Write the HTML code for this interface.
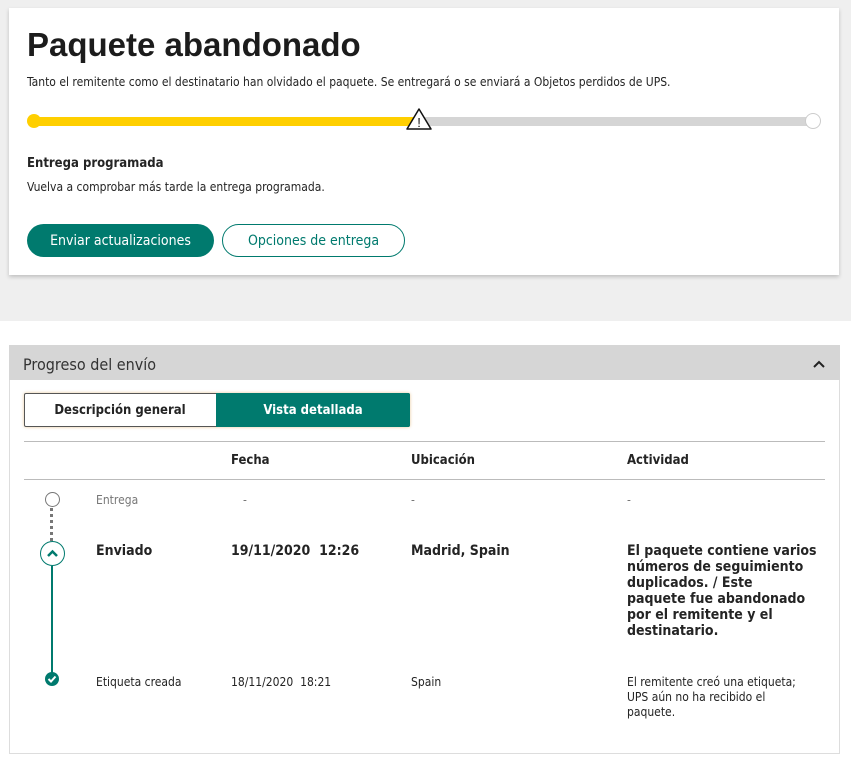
<!DOCTYPE html>
<html><head><meta charset="utf-8"><style>
*{margin:0;padding:0;box-sizing:border-box}
body{width:851px;height:765px;background:#fff;font-family:"DejaVu Sans Condensed","Liberation Sans",sans-serif;color:#242424;position:relative;overflow:hidden}
.bg{position:absolute;left:0;top:0;width:851px;height:321px;background:#efefef}
.card{position:absolute;left:9px;top:8px;width:830px;height:267px;background:#fff;box-shadow:0 2px 4px rgba(0,0,0,.2)}
.a{position:absolute;white-space:nowrap}
.btn{position:absolute;top:224px;height:33px;border-radius:17px;font-size:14px;display:flex;align-items:center;justify-content:center}
.panel{position:absolute;left:9px;top:345px;width:831px;height:409px;border:1px solid #ddd;border-top:none}
.ph{position:absolute;left:9px;top:345px;width:831px;height:35px;background:#d6d6d6}
.line{position:absolute;left:24px;width:801px;height:1px;background:#bbb}
</style></head><body>
<div class="bg"></div>
<div class="card"></div>
<div class="a" style="left:27px;top:26px;font-family:'Liberation Sans',sans-serif;font-weight:bold;font-size:33px;color:#1c1c1c">Paquete abandonado</div>
<div class="a" style="left:27px;top:75px;font-size:12px">Tanto el remitente como el destinatario han olvidado el paquete. Se entregará o se enviará a Objetos perdidos de UPS.</div>
<div class="a" style="left:34px;top:117px;width:385px;height:9px;background:#ffcf00"></div>
<div class="a" style="left:419px;top:117px;width:394px;height:9px;background:#d5d5d5"></div>
<div class="a" style="left:27px;top:114px;width:14px;height:14px;border-radius:50%;background:#ffcf00"></div>
<div class="a" style="left:805px;top:113px;width:16px;height:16px;border-radius:50%;background:#fff;border:1px solid #ccc"></div>
<svg class="a" style="left:405px;top:107px" width="28" height="24" viewBox="0 0 28 24"><path d="M14 2 L26 22 L2 22 Z" fill="#fff" stroke="#111" stroke-width="1.5" stroke-linejoin="round"/><text x="14" y="20" text-anchor="middle" font-size="13" font-family="Liberation Sans" fill="#111">!</text></svg>
<div class="a" style="left:27px;top:156px;font-size:13px;font-weight:bold">Entrega programada</div>
<div class="a" style="left:27px;top:180px;font-size:12px">Vuelva a comprobar más tarde la entrega programada.</div>
<div class="btn" style="left:27px;width:187px;background:#007a6e;color:#fff">Enviar actualizaciones</div>
<div class="btn" style="left:222px;width:183px;border:1px solid #007a6e;color:#007a6e;background:#fff">Opciones de entrega</div>

<div class="panel"></div>
<div class="ph"></div>
<div class="a" style="left:23px;top:355px;font-size:16px;color:#333">Progreso del envío</div>
<svg class="a" style="left:812px;top:359px" width="14" height="10"><path d="M2 8 L7 3 L12 8" fill="none" stroke="#222" stroke-width="2"/></svg>
<div class="a" style="left:24px;top:393px;width:386px;height:34px;border:1px solid #555;border-radius:2px;box-shadow:0 0 3px rgba(200,120,0,.4)"></div>
<div class="a" style="left:216px;top:393px;width:194px;height:34px;background:#007a6e;border-radius:0 2px 2px 0"></div>
<div class="a" style="left:24px;top:403px;width:192px;text-align:center;font-size:13px;font-weight:bold">Descripción general</div>
<div class="a" style="left:216px;top:403px;width:194px;text-align:center;font-size:13px;font-weight:bold;color:#fff">Vista detallada</div>
<div class="line" style="top:441px"></div>
<div class="line" style="top:479px"></div>
<div class="a" style="left:231px;top:453px;font-size:13px;font-weight:bold">Fecha</div>
<div class="a" style="left:411px;top:453px;font-size:13px;font-weight:bold">Ubicación</div>
<div class="a" style="left:627px;top:453px;font-size:13px;font-weight:bold">Actividad</div>

<div class="a" style="left:45px;top:492px;width:15px;height:15px;border-radius:50%;border:1px solid #777;background:#fff"></div>
<div class="a" style="left:50px;top:508px;height:33px;border-left:3px dotted #777"></div>
<div class="a" style="left:40px;top:541px;width:25px;height:25px;border-radius:50%;border:1.5px solid #007a6e;background:#fff"></div>
<svg class="a" style="left:45px;top:546px" width="15" height="15"><path d="M3 10 L7.5 5.5 L12 10" fill="none" stroke="#007a6e" stroke-width="2.5"/></svg>
<div class="a" style="left:51px;top:566px;width:1.5px;height:108px;background:#007a6e"></div>
<div class="a" style="left:45px;top:672px;width:14px;height:14px;border-radius:50%;background:#007a6e"></div>
<svg class="a" style="left:45px;top:672px" width="14" height="14"><path d="M3.5 7 L6 9.5 L10.5 4.5" fill="none" stroke="#fff" stroke-width="2"/></svg>

<div class="a" style="left:96px;top:493px;font-size:12px;color:#777">Entrega</div>
<div class="a" style="left:243px;top:493px;font-size:12px;color:#777">-</div>
<div class="a" style="left:411px;top:493px;font-size:12px;color:#777">-</div>
<div class="a" style="left:627px;top:493px;font-size:12px;color:#777">-</div>

<div class="a" style="left:96px;top:543px;font-size:14px;font-weight:bold">Enviado</div>
<div class="a" style="left:231px;top:543px;font-size:14px;font-weight:bold">19/11/2020&nbsp; 12:26</div>
<div class="a" style="left:411px;top:543px;font-size:14px;font-weight:bold">Madrid, Spain</div>
<div class="a" style="left:627px;top:543px;font-size:14px;font-weight:bold;line-height:16px;width:200px">El paquete contiene varios<br>números de seguimiento<br>duplicados. / Este<br>paquete fue abandonado<br>por el remitente y el<br>destinatario.</div>

<div class="a" style="left:96px;top:675px;font-size:12px">Etiqueta creada</div>
<div class="a" style="left:231px;top:675px;font-size:12px">18/11/2020&nbsp; 18:21</div>
<div class="a" style="left:411px;top:675px;font-size:12px">Spain</div>
<div class="a" style="left:627px;top:675px;font-size:12px;line-height:15px;white-space:normal;width:185px">El remitente creó una etiqueta; UPS aún no ha recibido el paquete.</div>
</body></html>
